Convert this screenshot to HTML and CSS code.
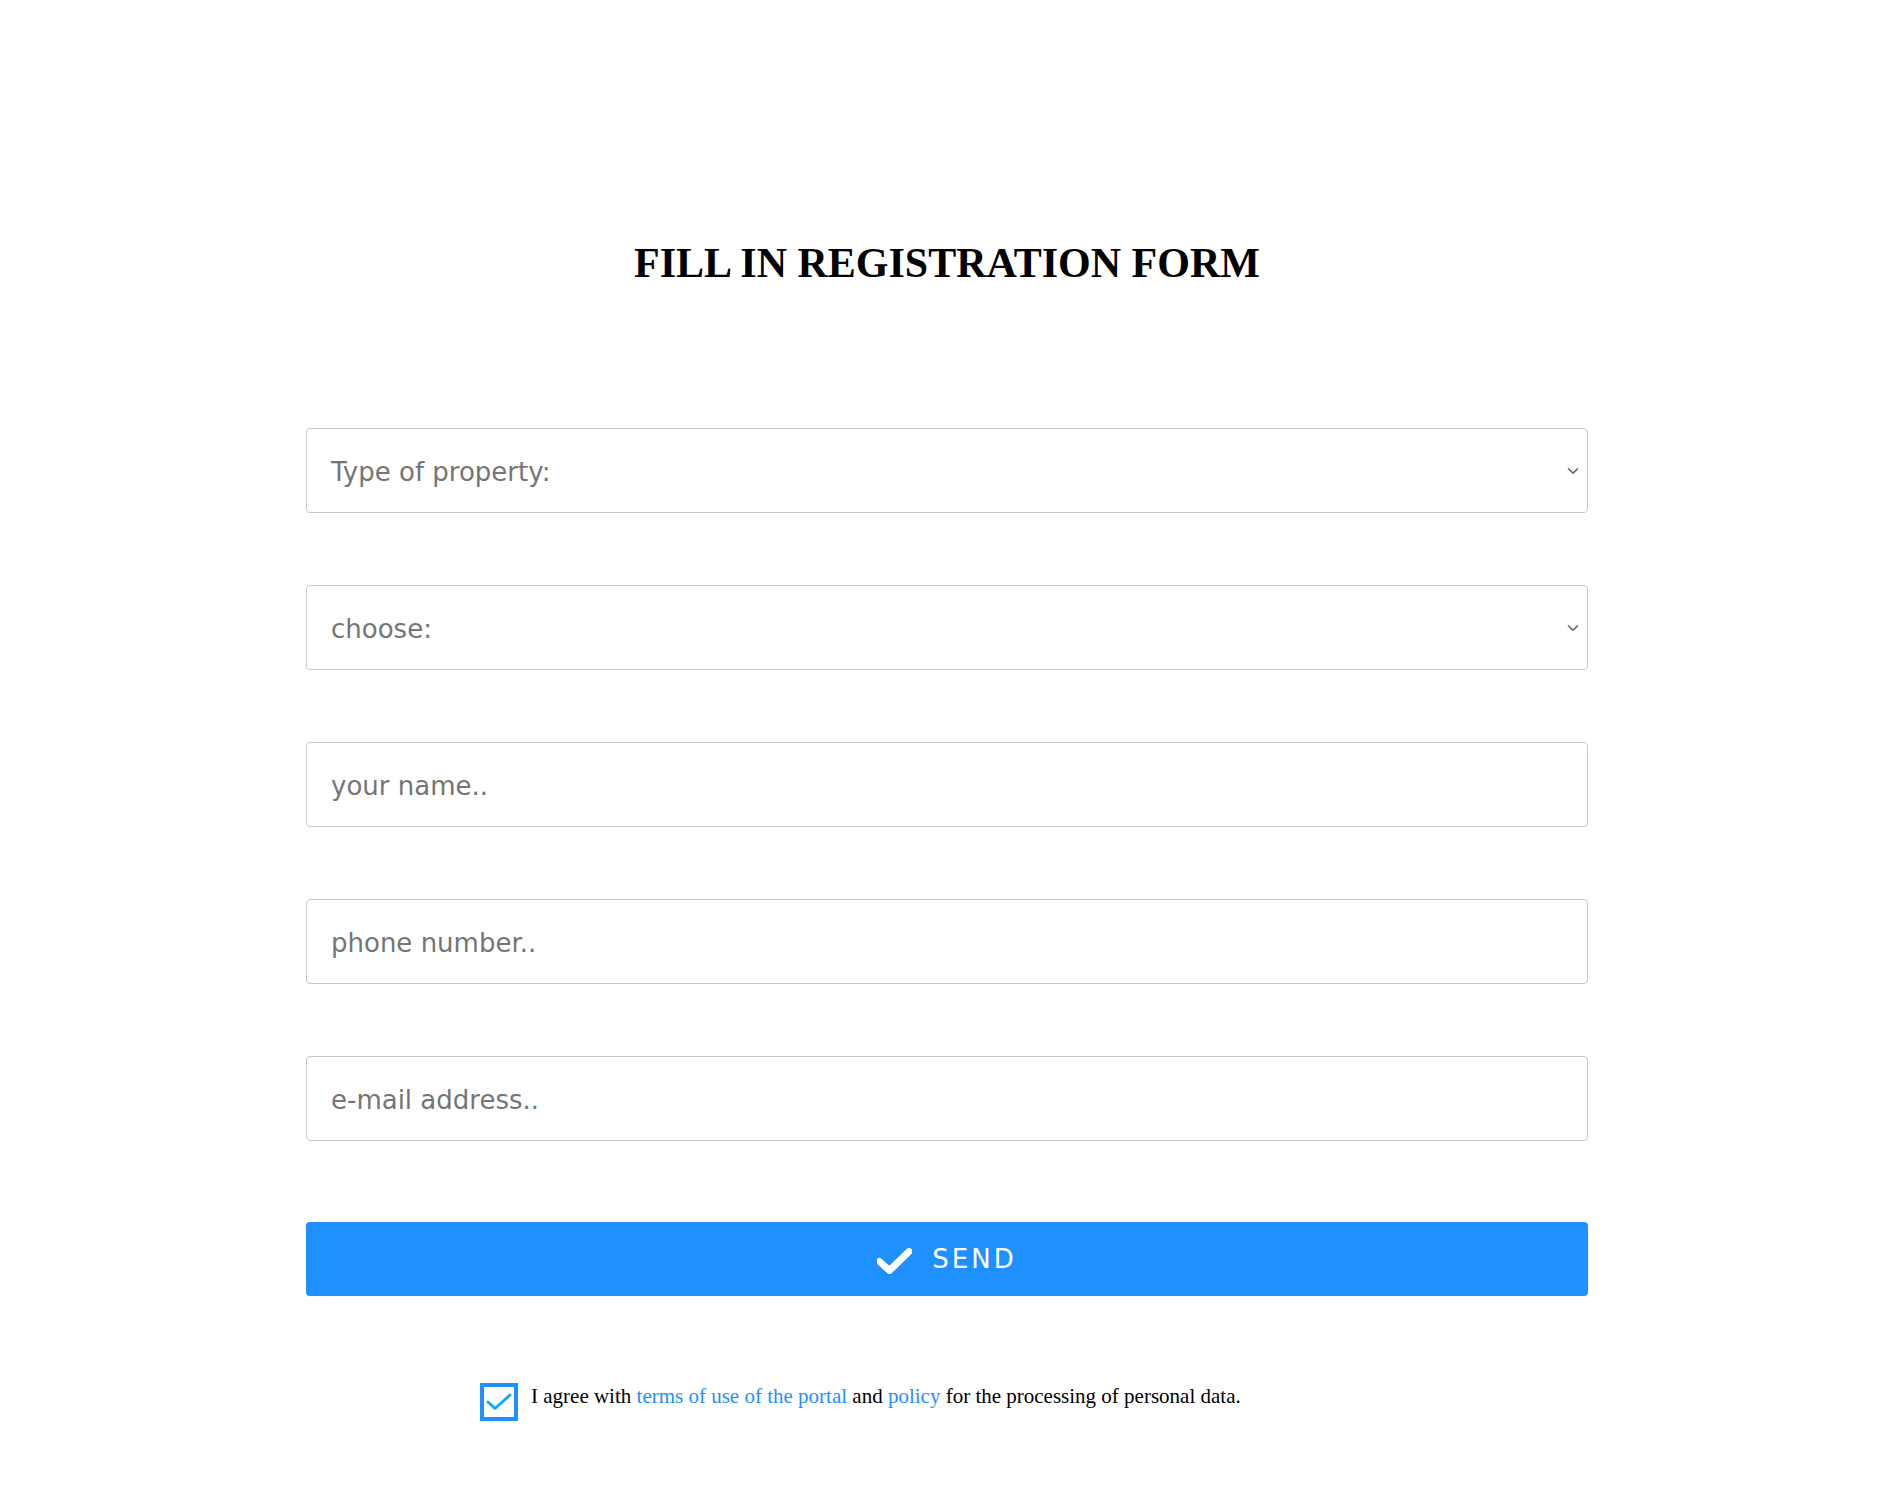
FILE: index.html
```html
<!DOCTYPE html>
<html lang="en">
<head>
<meta charset="utf-8">
<title>Registration form</title>
<link rel="stylesheet" href="styles.css">
</head>
<body>
<main class="page">
  <h1 class="title">FILL IN REGISTRATION FORM</h1>
  <form class="form">
    <div class="field select">
      <span class="placeholder">Type of property:</span>
      <svg class="chev" width="12" height="8" viewBox="0 0 12 8"><path d="M1 1.5 L6 6.2 L11 1.5" fill="none" stroke="#666" stroke-width="1.6"/></svg>
    </div>
    <div class="field select">
      <span class="placeholder">choose:</span>
      <svg class="chev" width="12" height="8" viewBox="0 0 12 8"><path d="M1 1.5 L6 6.2 L11 1.5" fill="none" stroke="#666" stroke-width="1.6"/></svg>
    </div>
    <div class="field"><span class="placeholder">your name..</span></div>
    <div class="field"><span class="placeholder">phone number..</span></div>
    <div class="field"><span class="placeholder">e-mail address..</span></div>
    <button type="button" class="send">
      <svg class="send-icon" width="35" height="26" viewBox="0 0 35 26"><path d="M2.5 13.5 L12.5 22.5 L32 3.5" fill="none" stroke="#fff" stroke-width="7" stroke-linejoin="round" stroke-linecap="round"/></svg>
      <span>SEND</span>
    </button>
    <div class="agree">
      <span class="box"><svg width="26" height="18" viewBox="0 0 26 18"><path d="M2 9 L9 15.5 L24 2" fill="none" stroke="#1ea4ff" stroke-width="3" stroke-linecap="round" stroke-linejoin="round"/></svg></span>
      <p class="agree-text">I agree with <a href="#">terms of use of the portal</a> and <a href="#">policy</a> for the processing of personal data.</p>
    </div>
  </form>
</main>
</body>
</html>
```
FILE: styles.css
```css
html, body {
  margin: 0;
  padding: 0;
  background: #fff;
}
.page {
  width: 1282px;
  margin: 0 auto;
  padding-top: 235px;
}
.title {
  margin: 0 0 137px;
  text-align: center;
  font-family: "Liberation Serif", "Times New Roman", serif;
  font-weight: bold;
  font-size: 42px;
  line-height: 56px;
  color: #000;
}
.form {
  display: flex;
  flex-direction: column;
  gap: 72px;
}
.field {
  box-sizing: border-box;
  height: 85px;
  border: 1px solid #c8c8c8;
  border-radius: 4px;
  display: flex;
  align-items: center;
  justify-content: space-between;
  padding: 3px 8px 0 24px;
}
.placeholder {
  font-family: "DejaVu Sans", Verdana, sans-serif;
  font-size: 26px;
  color: #757575;
}
.chev {
  display: block;
  margin-top: -3px;
}
.send {
  margin-top: 9px;
  height: 74px;
  border: none;
  border-radius: 4px;
  background: #1e90ff;
  color: #fff;
  display: flex;
  align-items: center;
  justify-content: center;
  gap: 20px;
  font-family: "DejaVu Sans", Verdana, sans-serif;
  font-size: 26px;
  letter-spacing: 3px;
  padding: 0;
  cursor: pointer;
}
.send-icon {
  display: block;
  margin-top: 3px;
}
.agree {
  margin-top: 15px;
  display: flex;
  align-items: flex-start;
  gap: 13px;
  padding-left: 174px;
}
.box {
  box-sizing: border-box;
  width: 38px;
  height: 38px;
  border: 4px solid #1e90ff;
  display: flex;
  align-items: center;
  justify-content: center;
  flex: none;
}
.agree-text {
  margin: 0;
  font-family: "Liberation Serif", "Times New Roman", serif;
  font-size: 21px;
  line-height: 26px;
  color: #000;
}
.agree-text a {
  color: #1e90ff;
  text-decoration: none;
}
```
